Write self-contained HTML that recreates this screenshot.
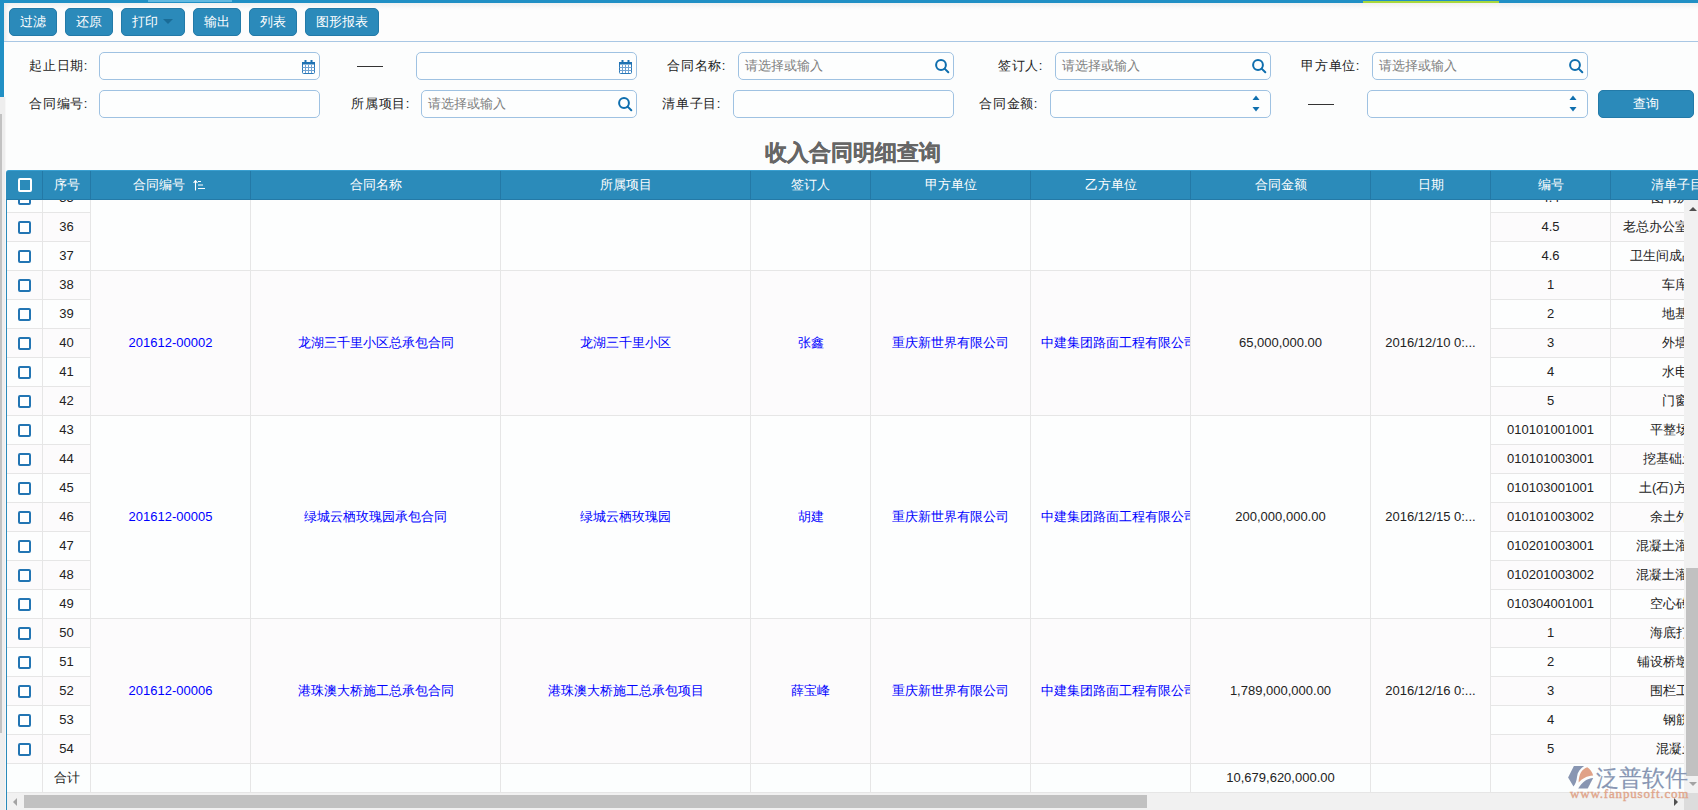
<!DOCTYPE html><html><head><meta charset="utf-8"><title>收入合同明细查询</title><style>
html,body{margin:0;padding:0;}
body{width:1698px;height:810px;overflow:hidden;position:relative;background:#fcfdfd;font-family:"Liberation Sans",sans-serif;font-size:13px;color:#222;}
body div{position:absolute;box-sizing:border-box;}
.t{white-space:nowrap;overflow:hidden;text-align:center;}
.btn{background:#2b8aba;border:1px solid #237aa8;border-radius:5px;color:#fff;text-align:center;line-height:26px;}
.inp{border:1px solid #9fc2e2;border-radius:5px;background:#fdfefe;}
.ph{color:#7e7e7e;}
.lbl{text-align:right;white-space:nowrap;color:#222;letter-spacing:0.6px;}
.hd{color:#fff;}
.lk{color:#0000ff;}
.cb{border:2px solid #2275b3;border-radius:2px;background:#fff;}

</style></head><body>
<div style="left:0px;top:0px;width:1698px;height:3px;background:#2190c5;"></div>
<div style="left:148px;top:0px;width:84px;height:2px;background:#62b9e1;"></div>
<div style="left:1363px;top:1px;width:136px;height:2px;background:#a8d83c;"></div>
<div style="left:0px;top:0px;width:4px;height:97px;background:#2190c5;"></div>
<div style="left:0px;top:97px;width:5px;height:713px;background:#eeeeee;"></div>
<div style="left:5px;top:97px;width:1px;height:713px;background:#f7f7f7;"></div>
<div style="left:0px;top:114px;width:2px;height:619px;background:#c2c2c2;"></div>
<div style="left:4px;top:3px;width:1694px;height:38px;background:linear-gradient(#f0f0f0,#fdfdfd 6px,#fdfdfd);"></div>
<div style="left:4px;top:41px;width:1694px;height:1px;background:#a9c7e4;"></div>
<div style="left:4px;top:3px;width:5px;height:38px;background:linear-gradient(to right,#ececec,rgba(253,253,253,0));"></div>
<div class="btn" style="left:9px;top:8px;width:48px;height:28px;">过滤</div>
<div class="btn" style="left:65px;top:8px;width:48px;height:28px;">还原</div>
<div class="btn" style="left:121px;top:8px;width:64px;height:28px;text-align:left;padding-left:10px;">打印</div>
<div style="left:163px;top:19px;width:0;height:0;border-left:5px solid transparent;border-right:5px solid transparent;border-top:5px solid #1a6c97;"></div>
<div class="btn" style="left:193px;top:8px;width:48px;height:28px;">输出</div>
<div class="btn" style="left:249px;top:8px;width:48px;height:28px;">列表</div>
<div class="btn" style="left:305px;top:8px;width:74px;height:28px;">图形报表</div>
<div class="lbl" style="left:-32px;top:52px;width:120px;height:28px;line-height:28px;">起止日期:</div>
<div class="inp" style="left:99px;top:52px;width:221px;height:28px;"><svg width="13" height="14" viewBox="0 0 13 14" style="position:absolute;right:4px;top:7px"><rect x="0.5" y="2.5" width="12" height="11" fill="#fff" stroke="#2a78b8" stroke-width="1" rx="1"/><rect x="0" y="2" width="13" height="2.5" fill="#1f72b3"/><rect x="2.5" y="0" width="2" height="3" fill="#1f72b3"/><rect x="8.5" y="0" width="2" height="3" fill="#1f72b3"/><path d="M3.5 5v8M6.5 5v8M9.5 5v8M0.5 7.5h12M0.5 10.5h12" stroke="#6fa3d3" stroke-width="1" fill="none"/></svg></div>
<div style="left:357px;top:66px;width:26px;height:1px;background:#333;"></div>
<div class="inp" style="left:416px;top:52px;width:221px;height:28px;"><svg width="13" height="14" viewBox="0 0 13 14" style="position:absolute;right:4px;top:7px"><rect x="0.5" y="2.5" width="12" height="11" fill="#fff" stroke="#2a78b8" stroke-width="1" rx="1"/><rect x="0" y="2" width="13" height="2.5" fill="#1f72b3"/><rect x="2.5" y="0" width="2" height="3" fill="#1f72b3"/><rect x="8.5" y="0" width="2" height="3" fill="#1f72b3"/><path d="M3.5 5v8M6.5 5v8M9.5 5v8M0.5 7.5h12M0.5 10.5h12" stroke="#6fa3d3" stroke-width="1" fill="none"/></svg></div>
<div class="lbl" style="left:606px;top:52px;width:120px;height:28px;line-height:28px;">合同名称:</div>
<div class="inp" style="left:738px;top:52px;width:216px;height:28px;"><span class="ph" style="position:absolute;left:6px;top:0;line-height:26px;">请选择或输入</span><svg width="16" height="16" viewBox="0 0 16 16" style="position:absolute;right:2px;top:6px"><circle cx="6" cy="6" r="4.9" fill="none" stroke="#0e6eae" stroke-width="2"/><line x1="9.6" y1="9.6" x2="13.3" y2="13.3" stroke="#0e6eae" stroke-width="2" stroke-linecap="round"/></svg></div>
<div class="lbl" style="left:923px;top:52px;width:120px;height:28px;line-height:28px;">签订人:</div>
<div class="inp" style="left:1055px;top:52px;width:216px;height:28px;"><span class="ph" style="position:absolute;left:6px;top:0;line-height:26px;">请选择或输入</span><svg width="16" height="16" viewBox="0 0 16 16" style="position:absolute;right:2px;top:6px"><circle cx="6" cy="6" r="4.9" fill="none" stroke="#0e6eae" stroke-width="2"/><line x1="9.6" y1="9.6" x2="13.3" y2="13.3" stroke="#0e6eae" stroke-width="2" stroke-linecap="round"/></svg></div>
<div class="lbl" style="left:1240px;top:52px;width:120px;height:28px;line-height:28px;">甲方单位:</div>
<div class="inp" style="left:1372px;top:52px;width:216px;height:28px;"><span class="ph" style="position:absolute;left:6px;top:0;line-height:26px;">请选择或输入</span><svg width="16" height="16" viewBox="0 0 16 16" style="position:absolute;right:2px;top:6px"><circle cx="6" cy="6" r="4.9" fill="none" stroke="#0e6eae" stroke-width="2"/><line x1="9.6" y1="9.6" x2="13.3" y2="13.3" stroke="#0e6eae" stroke-width="2" stroke-linecap="round"/></svg></div>
<div class="lbl" style="left:-32px;top:90px;width:120px;height:28px;line-height:28px;">合同编号:</div>
<div class="inp" style="left:99px;top:90px;width:221px;height:28px;"></div>
<div class="lbl" style="left:290px;top:90px;width:120px;height:28px;line-height:28px;">所属项目:</div>
<div class="inp" style="left:421px;top:90px;width:216px;height:28px;"><span class="ph" style="position:absolute;left:6px;top:0;line-height:26px;">请选择或输入</span><svg width="16" height="16" viewBox="0 0 16 16" style="position:absolute;right:2px;top:6px"><circle cx="6" cy="6" r="4.9" fill="none" stroke="#0e6eae" stroke-width="2"/><line x1="9.6" y1="9.6" x2="13.3" y2="13.3" stroke="#0e6eae" stroke-width="2" stroke-linecap="round"/></svg></div>
<div class="lbl" style="left:601px;top:90px;width:120px;height:28px;line-height:28px;">清单子目:</div>
<div class="inp" style="left:733px;top:90px;width:221px;height:28px;"></div>
<div class="lbl" style="left:918px;top:90px;width:120px;height:28px;line-height:28px;">合同金额:</div>
<div class="inp" style="left:1050px;top:90px;width:221px;height:28px;"><svg width="10" height="20" viewBox="0 0 10 20" style="position:absolute;right:9px;top:3px"><path d="M1.5 6H8.5L5 1.5Z" fill="#0f6fae"/><path d="M1.5 13H8.5L5 17.5Z" fill="#0f6fae"/></svg></div>
<div style="left:1308px;top:104px;width:26px;height:1px;background:#333;"></div>
<div class="inp" style="left:1367px;top:90px;width:221px;height:28px;"><svg width="10" height="20" viewBox="0 0 10 20" style="position:absolute;right:9px;top:3px"><path d="M1.5 6H8.5L5 1.5Z" fill="#0f6fae"/><path d="M1.5 13H8.5L5 17.5Z" fill="#0f6fae"/></svg></div>
<div class="btn" style="left:1598px;top:90px;width:96px;height:28px;">查询</div>
<div class="t" style="left:653px;top:138px;width:400px;height:30px;line-height:30px;font-size:22px;font-weight:bold;color:#666;-webkit-text-stroke:0.3px #666;">收入合同明细查询</div>
<div style="left:6px;top:200px;width:1678px;height:593px;overflow:hidden;background:#fdfefe;">
<div style="left:0px;top:-74px;width:1678px;height:145px;background:#fdfefe;"></div>
<div style="left:0px;top:70px;width:1678px;height:1px;background:#e6e6e6;"></div>
<div style="left:0px;top:71px;width:1678px;height:145px;background:#fcfbfc;"></div>
<div style="left:0px;top:215px;width:1678px;height:1px;background:#e6e6e6;"></div>
<div class="t lk" style="left:85px;top:71px;width:159px;height:144px;line-height:144px;text-align:center;">201612-00002</div>
<div class="t lk" style="left:245px;top:71px;width:249px;height:144px;line-height:144px;text-align:center;">龙湖三千里小区总承包合同</div>
<div class="t lk" style="left:495px;top:71px;width:249px;height:144px;line-height:144px;text-align:center;">龙湖三千里小区</div>
<div class="t lk" style="left:745px;top:71px;width:119px;height:144px;line-height:144px;text-align:center;">张鑫</div>
<div class="t lk" style="left:865px;top:71px;width:159px;height:144px;line-height:144px;text-align:center;">重庆新世界有限公司</div>
<div class="t lk" style="left:1025px;top:71px;width:159px;height:144px;line-height:144px;text-align:left;padding-left:10px;">中建集团路面工程有限公司</div>
<div class="t " style="left:1185px;top:71px;width:179px;height:144px;line-height:144px;text-align:center;">65,000,000.00</div>
<div class="t " style="left:1365px;top:71px;width:119px;height:144px;line-height:144px;text-align:center;">2016/12/10 0:...</div>
<div style="left:0px;top:216px;width:1678px;height:203px;background:#fdfefe;"></div>
<div style="left:0px;top:418px;width:1678px;height:1px;background:#e6e6e6;"></div>
<div class="t lk" style="left:85px;top:216px;width:159px;height:202px;line-height:202px;text-align:center;">201612-00005</div>
<div class="t lk" style="left:245px;top:216px;width:249px;height:202px;line-height:202px;text-align:center;">绿城云栖玫瑰园承包合同</div>
<div class="t lk" style="left:495px;top:216px;width:249px;height:202px;line-height:202px;text-align:center;">绿城云栖玫瑰园</div>
<div class="t lk" style="left:745px;top:216px;width:119px;height:202px;line-height:202px;text-align:center;">胡建</div>
<div class="t lk" style="left:865px;top:216px;width:159px;height:202px;line-height:202px;text-align:center;">重庆新世界有限公司</div>
<div class="t lk" style="left:1025px;top:216px;width:159px;height:202px;line-height:202px;text-align:left;padding-left:10px;">中建集团路面工程有限公司</div>
<div class="t " style="left:1185px;top:216px;width:179px;height:202px;line-height:202px;text-align:center;">200,000,000.00</div>
<div class="t " style="left:1365px;top:216px;width:119px;height:202px;line-height:202px;text-align:center;">2016/12/15 0:...</div>
<div style="left:0px;top:419px;width:1678px;height:145px;background:#fcfbfc;"></div>
<div style="left:0px;top:563px;width:1678px;height:1px;background:#e6e6e6;"></div>
<div class="t lk" style="left:85px;top:419px;width:159px;height:144px;line-height:144px;text-align:center;">201612-00006</div>
<div class="t lk" style="left:245px;top:419px;width:249px;height:144px;line-height:144px;text-align:center;">港珠澳大桥施工总承包合同</div>
<div class="t lk" style="left:495px;top:419px;width:249px;height:144px;line-height:144px;text-align:center;">港珠澳大桥施工总承包项目</div>
<div class="t lk" style="left:745px;top:419px;width:119px;height:144px;line-height:144px;text-align:center;">薛宝峰</div>
<div class="t lk" style="left:865px;top:419px;width:159px;height:144px;line-height:144px;text-align:center;">重庆新世界有限公司</div>
<div class="t lk" style="left:1025px;top:419px;width:159px;height:144px;line-height:144px;text-align:left;padding-left:10px;">中建集团路面工程有限公司</div>
<div class="t " style="left:1185px;top:419px;width:179px;height:144px;line-height:144px;text-align:center;">1,789,000,000.00</div>
<div class="t " style="left:1365px;top:419px;width:119px;height:144px;line-height:144px;text-align:center;">2016/12/16 0:...</div>
<div style="left:0px;top:-16px;width:84px;height:28px;background:#fdfefe;"></div>
<div style="left:1484px;top:-16px;width:1800px;height:28px;background:#fdfefe;"></div>
<div style="left:0px;top:12px;width:84px;height:1px;background:#e6e6e6;"></div>
<div style="left:1484px;top:12px;width:1800px;height:1px;background:#e6e6e6;"></div>
<div class="cb" style="left:12px;top:-8px;width:13px;height:13px;"></div>
<div class="t" style="left:37px;top:-16px;width:47px;height:28px;line-height:28px;">35</div>
<div class="t" style="left:1485px;top:-16px;width:119px;height:28px;line-height:28px;">4.4</div>
<div class="t" style="left:1645px;top:-16px;width:200px;height:28px;line-height:28px;text-align:left;overflow:visible;">图书房装修</div>
<div style="left:0px;top:13px;width:84px;height:28px;background:#fcfbfc;"></div>
<div style="left:1484px;top:13px;width:1800px;height:28px;background:#fcfbfc;"></div>
<div style="left:0px;top:41px;width:84px;height:1px;background:#e6e6e6;"></div>
<div style="left:1484px;top:41px;width:1800px;height:1px;background:#e6e6e6;"></div>
<div class="cb" style="left:12px;top:21px;width:13px;height:13px;"></div>
<div class="t" style="left:37px;top:13px;width:47px;height:28px;line-height:28px;">36</div>
<div class="t" style="left:1485px;top:13px;width:119px;height:28px;line-height:28px;">4.5</div>
<div class="t" style="left:1617px;top:13px;width:200px;height:28px;line-height:28px;text-align:left;overflow:visible;">老总办公室装修</div>
<div style="left:0px;top:42px;width:84px;height:28px;background:#fdfefe;"></div>
<div style="left:1484px;top:42px;width:1800px;height:28px;background:#fdfefe;"></div>
<div style="left:0px;top:70px;width:84px;height:1px;background:#e6e6e6;"></div>
<div style="left:1484px;top:70px;width:1800px;height:1px;background:#e6e6e6;"></div>
<div class="cb" style="left:12px;top:50px;width:13px;height:13px;"></div>
<div class="t" style="left:37px;top:42px;width:47px;height:28px;line-height:28px;">37</div>
<div class="t" style="left:1485px;top:42px;width:119px;height:28px;line-height:28px;">4.6</div>
<div class="t" style="left:1624px;top:42px;width:200px;height:28px;line-height:28px;text-align:left;overflow:visible;">卫生间成品隔断</div>
<div style="left:0px;top:71px;width:84px;height:28px;background:#fcfbfc;"></div>
<div style="left:1484px;top:71px;width:1800px;height:28px;background:#fcfbfc;"></div>
<div style="left:0px;top:99px;width:84px;height:1px;background:#e6e6e6;"></div>
<div style="left:1484px;top:99px;width:1800px;height:1px;background:#e6e6e6;"></div>
<div class="cb" style="left:12px;top:79px;width:13px;height:13px;"></div>
<div class="t" style="left:37px;top:71px;width:47px;height:28px;line-height:28px;">38</div>
<div class="t" style="left:1485px;top:71px;width:119px;height:28px;line-height:28px;">1</div>
<div class="t" style="left:1656px;top:71px;width:200px;height:28px;line-height:28px;text-align:left;overflow:visible;">车库顶板</div>
<div style="left:0px;top:100px;width:84px;height:28px;background:#fdfefe;"></div>
<div style="left:1484px;top:100px;width:1800px;height:28px;background:#fdfefe;"></div>
<div style="left:0px;top:128px;width:84px;height:1px;background:#e6e6e6;"></div>
<div style="left:1484px;top:128px;width:1800px;height:1px;background:#e6e6e6;"></div>
<div class="cb" style="left:12px;top:108px;width:13px;height:13px;"></div>
<div class="t" style="left:37px;top:100px;width:47px;height:28px;line-height:28px;">39</div>
<div class="t" style="left:1485px;top:100px;width:119px;height:28px;line-height:28px;">2</div>
<div class="t" style="left:1656px;top:100px;width:200px;height:28px;line-height:28px;text-align:left;overflow:visible;">地基处理</div>
<div style="left:0px;top:129px;width:84px;height:28px;background:#fcfbfc;"></div>
<div style="left:1484px;top:129px;width:1800px;height:28px;background:#fcfbfc;"></div>
<div style="left:0px;top:157px;width:84px;height:1px;background:#e6e6e6;"></div>
<div style="left:1484px;top:157px;width:1800px;height:1px;background:#e6e6e6;"></div>
<div class="cb" style="left:12px;top:137px;width:13px;height:13px;"></div>
<div class="t" style="left:37px;top:129px;width:47px;height:28px;line-height:28px;">40</div>
<div class="t" style="left:1485px;top:129px;width:119px;height:28px;line-height:28px;">3</div>
<div class="t" style="left:1656px;top:129px;width:200px;height:28px;line-height:28px;text-align:left;overflow:visible;">外墙保温</div>
<div style="left:0px;top:158px;width:84px;height:28px;background:#fdfefe;"></div>
<div style="left:1484px;top:158px;width:1800px;height:28px;background:#fdfefe;"></div>
<div style="left:0px;top:186px;width:84px;height:1px;background:#e6e6e6;"></div>
<div style="left:1484px;top:186px;width:1800px;height:1px;background:#e6e6e6;"></div>
<div class="cb" style="left:12px;top:166px;width:13px;height:13px;"></div>
<div class="t" style="left:37px;top:158px;width:47px;height:28px;line-height:28px;">41</div>
<div class="t" style="left:1485px;top:158px;width:119px;height:28px;line-height:28px;">4</div>
<div class="t" style="left:1656px;top:158px;width:200px;height:28px;line-height:28px;text-align:left;overflow:visible;">水电安装</div>
<div style="left:0px;top:187px;width:84px;height:28px;background:#fcfbfc;"></div>
<div style="left:1484px;top:187px;width:1800px;height:28px;background:#fcfbfc;"></div>
<div style="left:0px;top:215px;width:84px;height:1px;background:#e6e6e6;"></div>
<div style="left:1484px;top:215px;width:1800px;height:1px;background:#e6e6e6;"></div>
<div class="cb" style="left:12px;top:195px;width:13px;height:13px;"></div>
<div class="t" style="left:37px;top:187px;width:47px;height:28px;line-height:28px;">42</div>
<div class="t" style="left:1485px;top:187px;width:119px;height:28px;line-height:28px;">5</div>
<div class="t" style="left:1656px;top:187px;width:200px;height:28px;line-height:28px;text-align:left;overflow:visible;">门窗安装</div>
<div style="left:0px;top:216px;width:84px;height:28px;background:#fdfefe;"></div>
<div style="left:1484px;top:216px;width:1800px;height:28px;background:#fdfefe;"></div>
<div style="left:0px;top:244px;width:84px;height:1px;background:#e6e6e6;"></div>
<div style="left:1484px;top:244px;width:1800px;height:1px;background:#e6e6e6;"></div>
<div class="cb" style="left:12px;top:224px;width:13px;height:13px;"></div>
<div class="t" style="left:37px;top:216px;width:47px;height:28px;line-height:28px;">43</div>
<div class="t" style="left:1485px;top:216px;width:119px;height:28px;line-height:28px;">010101001001</div>
<div class="t" style="left:1644px;top:216px;width:200px;height:28px;line-height:28px;text-align:left;overflow:visible;">平整场地工程</div>
<div style="left:0px;top:245px;width:84px;height:28px;background:#fcfbfc;"></div>
<div style="left:1484px;top:245px;width:1800px;height:28px;background:#fcfbfc;"></div>
<div style="left:0px;top:273px;width:84px;height:1px;background:#e6e6e6;"></div>
<div style="left:1484px;top:273px;width:1800px;height:1px;background:#e6e6e6;"></div>
<div class="cb" style="left:12px;top:253px;width:13px;height:13px;"></div>
<div class="t" style="left:37px;top:245px;width:47px;height:28px;line-height:28px;">44</div>
<div class="t" style="left:1485px;top:245px;width:119px;height:28px;line-height:28px;">010101003001</div>
<div class="t" style="left:1637px;top:245px;width:200px;height:28px;line-height:28px;text-align:left;overflow:visible;">挖基础土方工程</div>
<div style="left:0px;top:274px;width:84px;height:28px;background:#fdfefe;"></div>
<div style="left:1484px;top:274px;width:1800px;height:28px;background:#fdfefe;"></div>
<div style="left:0px;top:302px;width:84px;height:1px;background:#e6e6e6;"></div>
<div style="left:1484px;top:302px;width:1800px;height:1px;background:#e6e6e6;"></div>
<div class="cb" style="left:12px;top:282px;width:13px;height:13px;"></div>
<div class="t" style="left:37px;top:274px;width:47px;height:28px;line-height:28px;">45</div>
<div class="t" style="left:1485px;top:274px;width:119px;height:28px;line-height:28px;">010103001001</div>
<div class="t" style="left:1633px;top:274px;width:200px;height:28px;line-height:28px;text-align:left;overflow:visible;">土(石)方回填</div>
<div style="left:0px;top:303px;width:84px;height:28px;background:#fcfbfc;"></div>
<div style="left:1484px;top:303px;width:1800px;height:28px;background:#fcfbfc;"></div>
<div style="left:0px;top:331px;width:84px;height:1px;background:#e6e6e6;"></div>
<div style="left:1484px;top:331px;width:1800px;height:1px;background:#e6e6e6;"></div>
<div class="cb" style="left:12px;top:311px;width:13px;height:13px;"></div>
<div class="t" style="left:37px;top:303px;width:47px;height:28px;line-height:28px;">46</div>
<div class="t" style="left:1485px;top:303px;width:119px;height:28px;line-height:28px;">010101003002</div>
<div class="t" style="left:1644px;top:303px;width:200px;height:28px;line-height:28px;text-align:left;overflow:visible;">余土外运工程</div>
<div style="left:0px;top:332px;width:84px;height:28px;background:#fdfefe;"></div>
<div style="left:1484px;top:332px;width:1800px;height:28px;background:#fdfefe;"></div>
<div style="left:0px;top:360px;width:84px;height:1px;background:#e6e6e6;"></div>
<div style="left:1484px;top:360px;width:1800px;height:1px;background:#e6e6e6;"></div>
<div class="cb" style="left:12px;top:340px;width:13px;height:13px;"></div>
<div class="t" style="left:37px;top:332px;width:47px;height:28px;line-height:28px;">47</div>
<div class="t" style="left:1485px;top:332px;width:119px;height:28px;line-height:28px;">010201003001</div>
<div class="t" style="left:1630px;top:332px;width:200px;height:28px;line-height:28px;text-align:left;overflow:visible;">混凝土灌注桩工程</div>
<div style="left:0px;top:361px;width:84px;height:28px;background:#fcfbfc;"></div>
<div style="left:1484px;top:361px;width:1800px;height:28px;background:#fcfbfc;"></div>
<div style="left:0px;top:389px;width:84px;height:1px;background:#e6e6e6;"></div>
<div style="left:1484px;top:389px;width:1800px;height:1px;background:#e6e6e6;"></div>
<div class="cb" style="left:12px;top:369px;width:13px;height:13px;"></div>
<div class="t" style="left:37px;top:361px;width:47px;height:28px;line-height:28px;">48</div>
<div class="t" style="left:1485px;top:361px;width:119px;height:28px;line-height:28px;">010201003002</div>
<div class="t" style="left:1630px;top:361px;width:200px;height:28px;line-height:28px;text-align:left;overflow:visible;">混凝土灌注桩工程</div>
<div style="left:0px;top:390px;width:84px;height:28px;background:#fdfefe;"></div>
<div style="left:1484px;top:390px;width:1800px;height:28px;background:#fdfefe;"></div>
<div style="left:0px;top:418px;width:84px;height:1px;background:#e6e6e6;"></div>
<div style="left:1484px;top:418px;width:1800px;height:1px;background:#e6e6e6;"></div>
<div class="cb" style="left:12px;top:398px;width:13px;height:13px;"></div>
<div class="t" style="left:37px;top:390px;width:47px;height:28px;line-height:28px;">49</div>
<div class="t" style="left:1485px;top:390px;width:119px;height:28px;line-height:28px;">010304001001</div>
<div class="t" style="left:1644px;top:390px;width:200px;height:28px;line-height:28px;text-align:left;overflow:visible;">空心砖墙工程</div>
<div style="left:0px;top:419px;width:84px;height:28px;background:#fcfbfc;"></div>
<div style="left:1484px;top:419px;width:1800px;height:28px;background:#fcfbfc;"></div>
<div style="left:0px;top:447px;width:84px;height:1px;background:#e6e6e6;"></div>
<div style="left:1484px;top:447px;width:1800px;height:1px;background:#e6e6e6;"></div>
<div class="cb" style="left:12px;top:427px;width:13px;height:13px;"></div>
<div class="t" style="left:37px;top:419px;width:47px;height:28px;line-height:28px;">50</div>
<div class="t" style="left:1485px;top:419px;width:119px;height:28px;line-height:28px;">1</div>
<div class="t" style="left:1644px;top:419px;width:200px;height:28px;line-height:28px;text-align:left;overflow:visible;">海底打桩工程</div>
<div style="left:0px;top:448px;width:84px;height:28px;background:#fdfefe;"></div>
<div style="left:1484px;top:448px;width:1800px;height:28px;background:#fdfefe;"></div>
<div style="left:0px;top:476px;width:84px;height:1px;background:#e6e6e6;"></div>
<div style="left:1484px;top:476px;width:1800px;height:1px;background:#e6e6e6;"></div>
<div class="cb" style="left:12px;top:456px;width:13px;height:13px;"></div>
<div class="t" style="left:37px;top:448px;width:47px;height:28px;line-height:28px;">51</div>
<div class="t" style="left:1485px;top:448px;width:119px;height:28px;line-height:28px;">2</div>
<div class="t" style="left:1631px;top:448px;width:200px;height:28px;line-height:28px;text-align:left;overflow:visible;">铺设桥墩工程</div>
<div style="left:0px;top:477px;width:84px;height:28px;background:#fcfbfc;"></div>
<div style="left:1484px;top:477px;width:1800px;height:28px;background:#fcfbfc;"></div>
<div style="left:0px;top:505px;width:84px;height:1px;background:#e6e6e6;"></div>
<div style="left:1484px;top:505px;width:1800px;height:1px;background:#e6e6e6;"></div>
<div class="cb" style="left:12px;top:485px;width:13px;height:13px;"></div>
<div class="t" style="left:37px;top:477px;width:47px;height:28px;line-height:28px;">52</div>
<div class="t" style="left:1485px;top:477px;width:119px;height:28px;line-height:28px;">3</div>
<div class="t" style="left:1644px;top:477px;width:200px;height:28px;line-height:28px;text-align:left;overflow:visible;">围栏工程施工</div>
<div style="left:0px;top:506px;width:84px;height:28px;background:#fdfefe;"></div>
<div style="left:1484px;top:506px;width:1800px;height:28px;background:#fdfefe;"></div>
<div style="left:0px;top:534px;width:84px;height:1px;background:#e6e6e6;"></div>
<div style="left:1484px;top:534px;width:1800px;height:1px;background:#e6e6e6;"></div>
<div class="cb" style="left:12px;top:514px;width:13px;height:13px;"></div>
<div class="t" style="left:37px;top:506px;width:47px;height:28px;line-height:28px;">53</div>
<div class="t" style="left:1485px;top:506px;width:119px;height:28px;line-height:28px;">4</div>
<div class="t" style="left:1657px;top:506px;width:200px;height:28px;line-height:28px;text-align:left;overflow:visible;">钢筋工程</div>
<div style="left:0px;top:535px;width:84px;height:28px;background:#fcfbfc;"></div>
<div style="left:1484px;top:535px;width:1800px;height:28px;background:#fcfbfc;"></div>
<div style="left:0px;top:563px;width:84px;height:1px;background:#e6e6e6;"></div>
<div style="left:1484px;top:563px;width:1800px;height:1px;background:#e6e6e6;"></div>
<div class="cb" style="left:12px;top:543px;width:13px;height:13px;"></div>
<div class="t" style="left:37px;top:535px;width:47px;height:28px;line-height:28px;">54</div>
<div class="t" style="left:1485px;top:535px;width:119px;height:28px;line-height:28px;">5</div>
<div class="t" style="left:1650px;top:535px;width:200px;height:28px;line-height:28px;text-align:left;overflow:visible;">混凝土工程</div>
<div style="left:0px;top:564px;width:1678px;height:28px;background:#fcfefe;"></div>
<div style="left:0px;top:592px;width:1678px;height:1px;background:#e6e6e6;"></div>
<div class="t" style="left:37px;top:564px;width:47px;height:28px;line-height:28px;">合计</div>
<div class="t" style="left:1185px;top:564px;width:179px;height:28px;line-height:28px;">10,679,620,000.00</div>
<div style="left:36px;top:0;width:1px;height:593px;background:#e6e6e6;"></div>
<div style="left:84px;top:0;width:1px;height:593px;background:#e6e6e6;"></div>
<div style="left:244px;top:0;width:1px;height:593px;background:#e6e6e6;"></div>
<div style="left:494px;top:0;width:1px;height:593px;background:#e6e6e6;"></div>
<div style="left:744px;top:0;width:1px;height:593px;background:#e6e6e6;"></div>
<div style="left:864px;top:0;width:1px;height:593px;background:#e6e6e6;"></div>
<div style="left:1024px;top:0;width:1px;height:593px;background:#e6e6e6;"></div>
<div style="left:1184px;top:0;width:1px;height:593px;background:#e6e6e6;"></div>
<div style="left:1364px;top:0;width:1px;height:593px;background:#e6e6e6;"></div>
<div style="left:1484px;top:0;width:1px;height:593px;background:#e6e6e6;"></div>
<div style="left:1604px;top:0;width:1px;height:593px;background:#e6e6e6;"></div>
</div>
<div style="left:6px;top:200px;width:1px;height:610px;background:#2a8aba;"></div>
<div style="left:6px;top:170px;width:1700px;height:30px;background:#2b8bba;border-top:1px solid #3a9fd0;border-bottom:1px solid #2479a6;border-radius:3px 0 0 0;overflow:hidden;">
<div style="left:36px;top:0;width:1px;height:30px;background:#2479a6;"></div>
<div class="t hd" style="left:37px;top:0;width:47px;height:29px;line-height:27px;">序号</div>
<div style="left:84px;top:0;width:1px;height:30px;background:#2479a6;"></div>
<div class="t hd" style="left:127px;top:0;width:54px;height:29px;line-height:27px;text-align:left;">合同编号</div>
<svg width="13" height="11" viewBox="0 0 13 11" style="position:absolute;left:187px;top:9px"><path d="M2.5 10.5V0.8M0.6 2.8L2.5 0.6 4.4 2.8" stroke="#fff" stroke-width="1.1" fill="none"/><path d="M5 1.5h3M5 5h5M5 8.5h7" stroke="#fff" stroke-width="1.1"/></svg>
<div style="left:244px;top:0;width:1px;height:30px;background:#2479a6;"></div>
<div class="t hd" style="left:245px;top:0;width:249px;height:29px;line-height:27px;">合同名称</div>
<div style="left:494px;top:0;width:1px;height:30px;background:#2479a6;"></div>
<div class="t hd" style="left:495px;top:0;width:249px;height:29px;line-height:27px;">所属项目</div>
<div style="left:744px;top:0;width:1px;height:30px;background:#2479a6;"></div>
<div class="t hd" style="left:745px;top:0;width:119px;height:29px;line-height:27px;">签订人</div>
<div style="left:864px;top:0;width:1px;height:30px;background:#2479a6;"></div>
<div class="t hd" style="left:865px;top:0;width:159px;height:29px;line-height:27px;">甲方单位</div>
<div style="left:1024px;top:0;width:1px;height:30px;background:#2479a6;"></div>
<div class="t hd" style="left:1025px;top:0;width:159px;height:29px;line-height:27px;">乙方单位</div>
<div style="left:1184px;top:0;width:1px;height:30px;background:#2479a6;"></div>
<div class="t hd" style="left:1185px;top:0;width:179px;height:29px;line-height:27px;">合同金额</div>
<div style="left:1364px;top:0;width:1px;height:30px;background:#2479a6;"></div>
<div class="t hd" style="left:1365px;top:0;width:119px;height:29px;line-height:27px;">日期</div>
<div style="left:1484px;top:0;width:1px;height:30px;background:#2479a6;"></div>
<div class="t hd" style="left:1485px;top:0;width:119px;height:29px;line-height:27px;">编号</div>
<div style="left:1604px;top:0;width:1px;height:30px;background:#2479a6;"></div>
<div class="t hd" style="left:1605px;top:0;width:131px;height:29px;line-height:27px;">清单子目</div>
<div style="left:12px;top:7px;width:14px;height:14px;border:2px solid #fff;border-radius:2px;"></div>
</div>
<div style="left:1684px;top:200px;width:14px;height:593px;background:#f1f1f1;"></div>
<div style="left:1689px;top:207px;width:0;height:0;border-left:4px solid transparent;border-right:4px solid transparent;border-bottom:4px solid #505050;"></div>
<div style="left:1686px;top:568px;width:12px;height:208px;background:#c1c1c1;"></div>
<div style="left:1689px;top:782px;width:0;height:0;border-left:4px solid transparent;border-right:4px solid transparent;border-top:4px solid #a3a3a3;"></div>
<div style="left:7px;top:793px;width:1677px;height:17px;background:#f1f1f1;"></div>
<div style="left:13px;top:798px;width:0;height:0;border-top:4px solid transparent;border-bottom:4px solid transparent;border-right:4px solid #a3a3a3;"></div>
<div style="left:24px;top:795px;width:1123px;height:13px;background:#c1c1c1;"></div>
<div style="left:1674px;top:798px;width:0;height:0;border-top:4px solid transparent;border-bottom:4px solid transparent;border-left:4px solid #505050;"></div>
<div style="left:1684px;top:793px;width:14px;height:17px;background:#dcdcdc;"></div>
<svg style="position:absolute;left:1562px;top:760px" width="36" height="32" viewBox="0 0 36 32"><path d="M11.9 5.9H22.1C18 8.5 15.5 12 15 17 14.6 21 13.5 24 11.5 26.5L6.1 17.4Z" fill="#8896b2"/><path d="M16.6 22.5C16.8 14 20 9 25.3 7.3 28 9 30.3 12 31.2 15.4 25 15.8 20 18.5 16.6 22.5Z" fill="#e0a287"/><path d="M16.2 28.5H25.7L31.2 18C25 18.5 20 22 16.2 28.5Z" fill="#8896b2"/></svg>
<div class="t" style="left:1596px;top:764px;width:100px;height:28px;line-height:28px;font-size:23px;font-weight:normal;color:#8796b3;-webkit-text-stroke:0.15px #8796b3;text-align:left;overflow:visible;">泛普软件</div>
<div class="t" style="left:1570px;top:787px;width:130px;height:14px;line-height:14px;font-family:'Liberation Serif',serif;font-size:13px;font-weight:normal;-webkit-text-stroke:0.35px #e0a58a;color:#e0a58a;text-align:left;overflow:visible;letter-spacing:0.82px;">www.fanpusoft.com</div>
</body></html>
